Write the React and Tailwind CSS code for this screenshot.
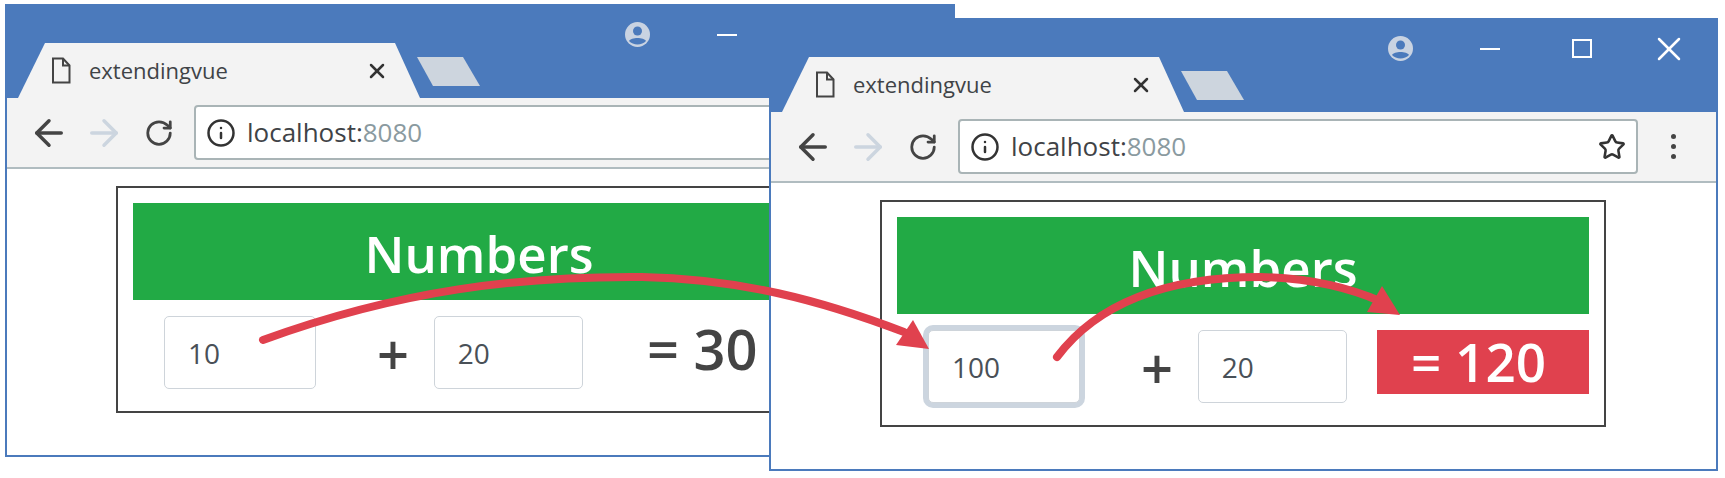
import { ArrowLeft, ArrowRight, RotateCw, Info, Star, X } from 'lucide-react';

const FileIcon = () => (
  <svg width="20" height="27" viewBox="0 0 20 27" fill="none" stroke="#444" strokeWidth="2">
    <path d="M2 1.5h10l6.5 7V25.5H2z" />
    <path d="M12 1.5v7h6.5" />
  </svg>
);

const ProfileIcon = () => (
  <svg width="27" height="27" viewBox="0 0 27 27">
    <circle cx="13.5" cy="13.5" r="12.5" fill="#c9d3e2" />
    <circle cx="13.5" cy="10" r="4.5" fill="#4b7abc" />
    <path d="M5 20c2-4 15-4 17 0-4 4.500-13 4.500-17 0z" fill="#4b7abc" />
  </svg>
);

const WindowControls = () => (
  <div className="flex items-center mt-[15px] pl-[1px] w-[330px] h-[27px]">
    <ProfileIcon />
    <div className="ml-[66px] w-[20px] h-[2px] bg-white"></div>
    <div className="ml-[72px] w-[20px] h-[19px] border-2 border-white"></div>
    <X className="ml-[57px] text-white" size={40} strokeWidth={1.5} />
  </div>
);

const Field = ({ value, width, focused }) => (
  <div
    className={`flex items-center pl-[23px] h-[73px] bg-white rounded-[5px] border border-[#ced4da] text-[28px] text-[#495057] ${width} ${
      focused ? 'ring-[5px] ring-[#ccd5df] border-[#a9b4b6]' : ''
    }`}
  >
    {value}
  </div>
);

const BrowserWindow = ({ className, first, total, focused, danger }) => (
  <div className={`absolute flex flex-col overflow-hidden bg-white border-2 border-[#4b7abc] ${className}`}>
    {/* title bar with the tab strip */}
    <div className="flex justify-between items-start h-[92px] shrink-0 bg-[#4b7abc]">
      <div className="flex self-end">
        <div className="flex items-center ml-[11px] pl-[33px] w-[402px] h-[55px] bg-[#f3f3f3] [clip-path:polygon(0_100%,27px_0,377px_0,100%_100%)]">
          <FileIcon />
          <span className="ml-[18px] w-[279px] text-[22px] text-[#3f4347]">extendingvue</span>
          <X className="-ml-[3px] text-[#333]" size={24} strokeWidth={2.5} />
        </div>
        <div className="self-end -ml-[3px] mb-[12px] w-[63px] h-[29px] bg-[#cdd5de] [clip-path:polygon(0_0,46px_0,100%_100%,16px_100%)]"></div>
      </div>
      <WindowControls />
    </div>

    {/* toolbar */}
    <div className="flex items-center h-[71px] shrink-0 pl-[21px] bg-[#f3f3f3] border-b-2 border-[#b0bcc0]">
      <ArrowLeft className="text-[#444]" size={42} strokeWidth={2} />
      <ArrowRight className="ml-[13px] text-[#ccd5df]" size={42} strokeWidth={2} />
      <RotateCw className="ml-[19px] text-[#444]" size={30} strokeWidth={2.2} />
      <div className="flex items-center ml-[20px] pl-[10px] pr-[10px] w-[680px] h-[55px] shrink-0 bg-white rounded-[4px] border-2 border-[#a9b4b6]">
        <Info className="text-[#333]" size={30} strokeWidth={2} />
        <span className="ml-[11px] text-[26px] text-[#3f4347]">
          localhost:<span className="text-[#8a9aa0]">8080</span>
        </span>
        <Star className="ml-auto text-[#333]" size={28} strokeWidth={2.2} />
      </div>
      <div className="flex flex-col gap-[5px] ml-[33px]">
        <div className="w-[5px] h-[5px] rounded-full bg-[#444]"></div>
        <div className="w-[5px] h-[5px] rounded-full bg-[#444]"></div>
        <div className="w-[5px] h-[5px] rounded-full bg-[#444]"></div>
      </div>
    </div>

    {/* page */}
    <div className="ml-[109px] mt-[17px] w-[726px] h-[227px] shrink-0 px-[15px] pt-[15px] border-2 border-[#444]">
      <div className="flex items-center justify-center h-[97px] pt-[3px] bg-[#22aa45] text-white text-[51px] font-semibold">
        Numbers
      </div>
      <div className="flex items-start mt-[16px] pl-[31px]">
        <Field value={first} width="w-[153px]" focused={focused} />
        <div className="flex justify-center items-center w-[118px] pl-[36px] h-[73px] text-[56px] font-semibold text-[#444]">+</div>
        <Field value="20" width="w-[150px]" />
        <div
          className={`flex items-center ml-[30px] pl-[34px] w-[212px] h-[64px] shrink-0 font-semibold ${
            danger ? 'bg-[#e0414e] text-white text-[53px]' : 'text-[#444] text-[56px]'
          }`}
        >
          {total}
        </div>
      </div>
    </div>
  </div>
);

const App = () => {
  return (
    <div className="relative w-[1725px] h-[478px] overflow-hidden bg-white font-['Open_Sans',sans-serif]">
      <BrowserWindow className="left-[5px] top-[4px] w-[950px] h-[453px]" first="10" total="= 30" />
      <BrowserWindow className="left-[769px] top-[18px] w-[949px] h-[453px]" first="100" total="= 120" focused danger />

      {/* annotation arrows */}
      <svg className="absolute left-0 top-0" width="1725" height="478" fill="none">
        <path d="M263 340C400 290 520 276 642 277C740 279 820 300 904 332" stroke="#e0414e" strokeWidth="8" strokeLinecap="round" />
        <path d="M929 349L913 320L896 345Z" fill="#e0414e" />
        <path d="M1057 357C1100 300 1170 277 1260 277C1310 278 1350 288 1382 302" stroke="#e0414e" strokeWidth="8" strokeLinecap="round" />
        <path d="M1400 315L1382 286L1367 312Z" fill="#e0414e" />
      </svg>
    </div>
  );
};

export default App;
